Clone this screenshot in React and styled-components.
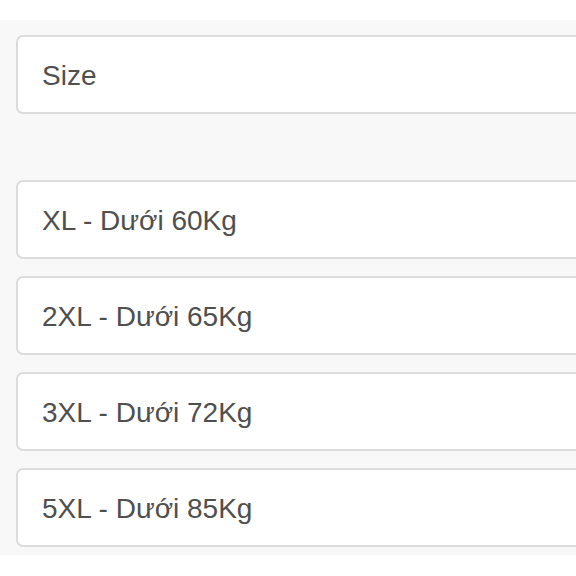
import React from "react";
import styled, { createGlobalStyle } from "styled-components";

const GlobalStyle = createGlobalStyle`
  html, body {
    margin: 0;
    padding: 0;
    background: #ffffff;
    overflow: hidden;
  }
  body {
    font-family: "Liberation Sans", Arial, sans-serif;
  }
`;

const options = [
  "XL - Dưới 60Kg",
  "2XL - Dưới 65Kg",
  "3XL - Dưới 72Kg",
  "5XL - Dưới 85Kg",
];

const App = () => {
  return (
    <Page>
      <GlobalStyle />
      <Panel>
        <Field>Size</Field>
        <List>
          {options.map((opt) => (
            <Field key={opt}>{opt}</Field>
          ))}
        </List>
      </Panel>
    </Page>
  );
};

export default App;

const Page = styled.div`
  width: 576px;
  height: 576px;
  padding-top: 20px;
  box-sizing: border-box;
  overflow: hidden;
`;

const Panel = styled.div`
  background: #f8f8f8;
  padding: 15px 0 8px 16px;
  display: flex;
  flex-direction: column;
  gap: 66px;
`;

const List = styled.div`
  display: flex;
  flex-direction: column;
  gap: 17px;
`;

const Field = styled.div`
  width: 640px;
  height: 79px;
  box-sizing: border-box;
  background: #ffffff;
  border: 2px solid #dcdcdc;
  border-radius: 7px;
  display: flex;
  align-items: center;
  padding-left: 24px;
  padding-top: 2px;
  font-family: "Liberation Sans", Arial, sans-serif;
  font-size: 28px;
  color: #4f4f4f;
`;
